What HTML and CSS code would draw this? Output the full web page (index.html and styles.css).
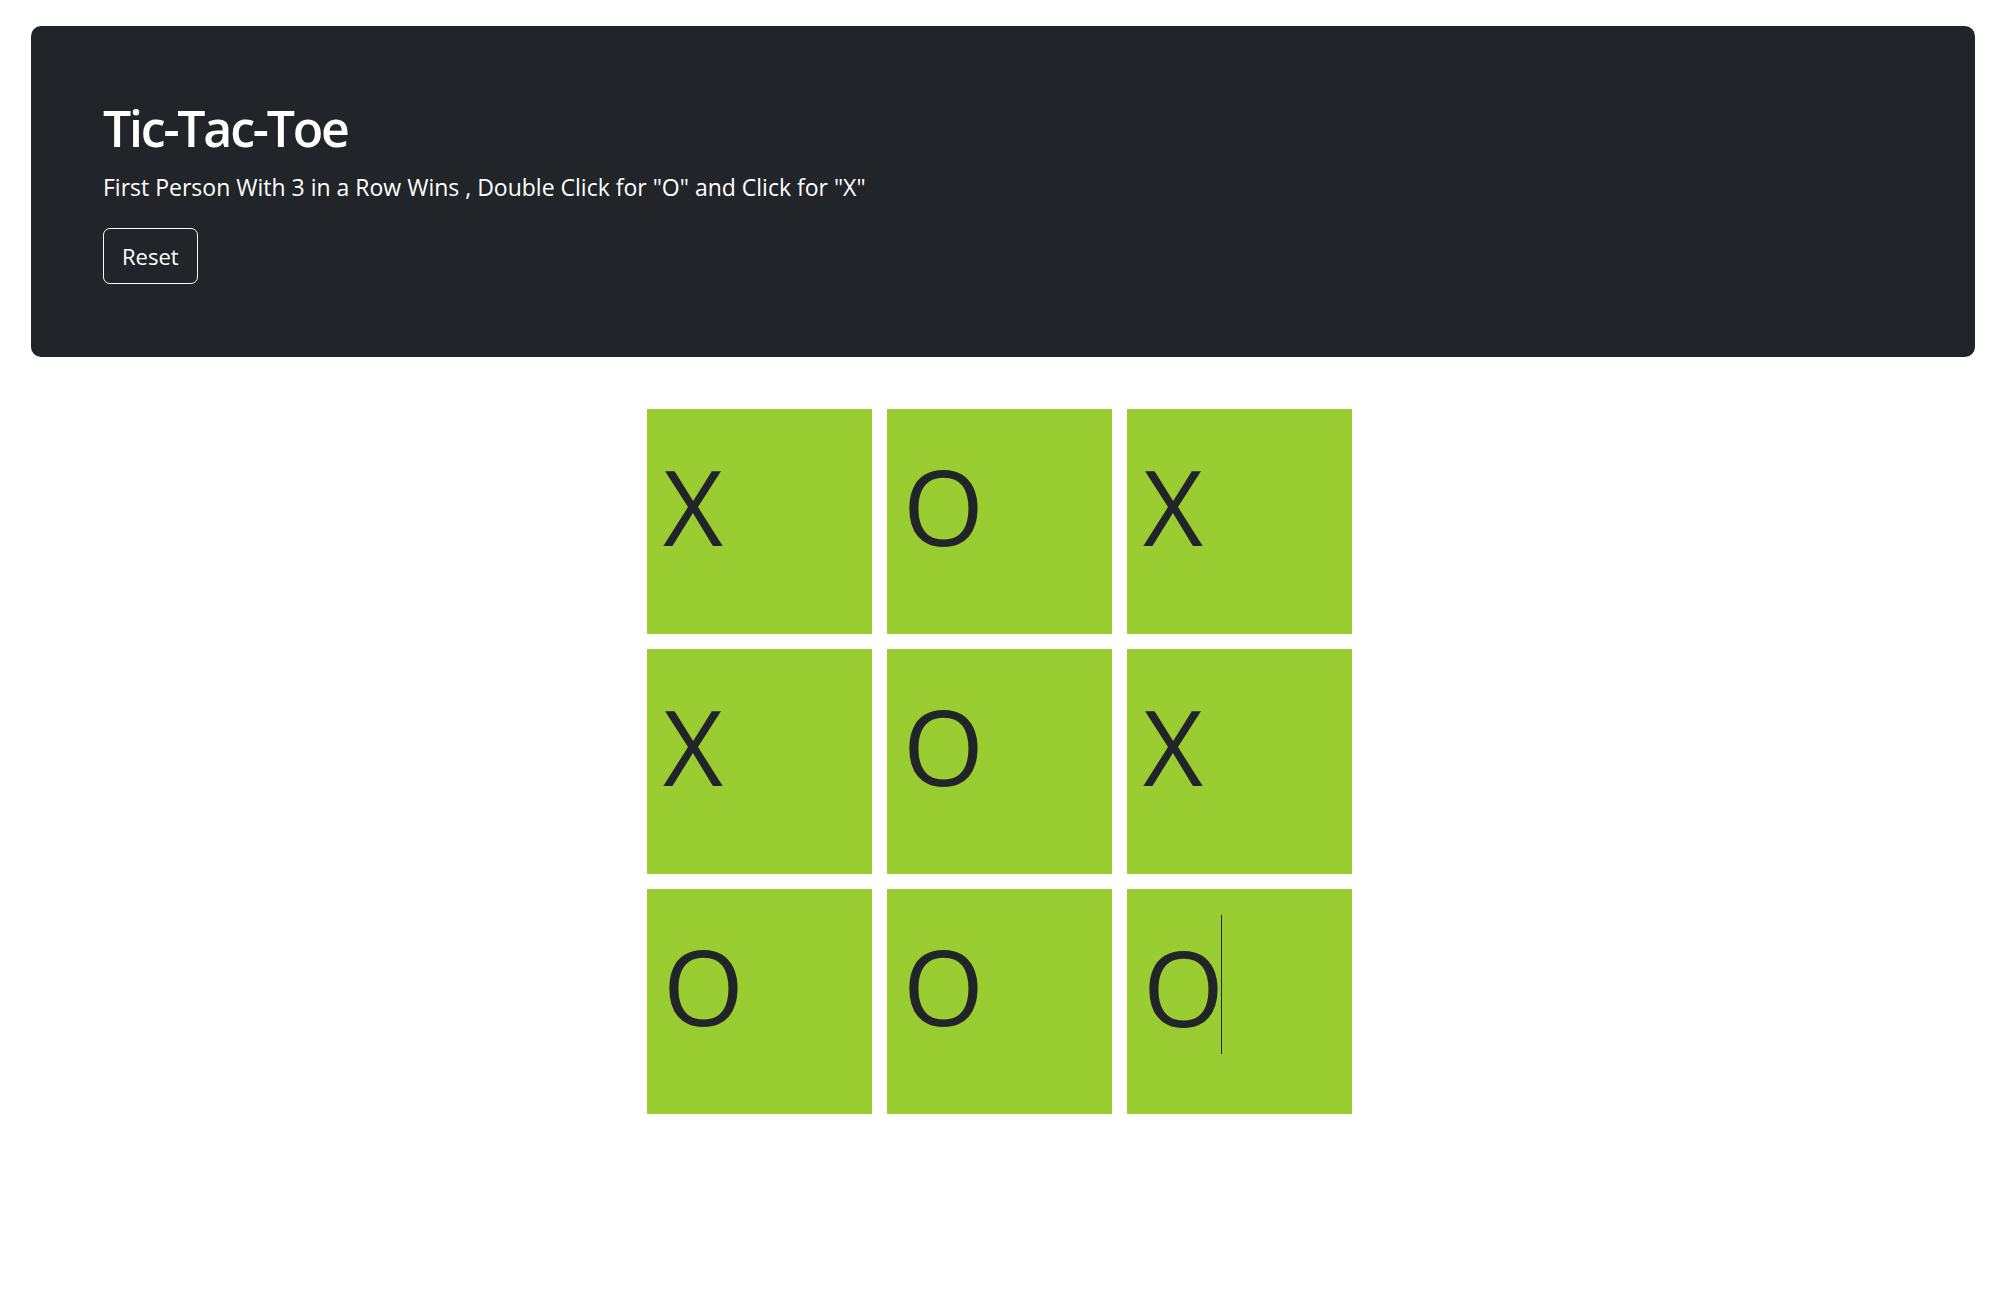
FILE: index.html
```html
<!DOCTYPE html>
<html lang="en">
<head>
<meta charset="utf-8">
<title>Tic-Tac-Toe</title>
<link rel="stylesheet" href="styles.css">
</head>
<body>
<header class="hero">
  <h1 class="hero-title">Tic-Tac-Toe</h1>
  <p class="hero-text">First Person With 3 in a Row Wins , Double Click for "O" and Click for "X"</p>
  <button class="btn-reset" type="button">Reset</button>
</header>
<main class="stage">
  <div class="board">
    <div class="cell">X</div>
    <div class="cell">O</div>
    <div class="cell">X</div>
    <div class="cell">X</div>
    <div class="cell">O</div>
    <div class="cell">X</div>
    <div class="cell">O</div>
    <div class="cell">O</div>
    <div class="cell">O<span class="caret"></span></div>
  </div>
</main>
</body>
</html>
```

FILE: styles.css
```css
* { box-sizing: border-box; }

html, body {
  margin: 0;
  padding: 0;
  background: #ffffff;
}

body {
  font-family: "Open Sans", "Noto Sans", "Liberation Sans", sans-serif;
  color: #212529;
}

.hero {
  margin: 26px 39px 0 31px;
  padding: 72px 72px 73px;
  background: #212529;
  border-radius: 10px;
  color: #ffffff;
}

.hero-title {
  margin: 0;
  font-size: 50px;
  line-height: 60px;
  font-weight: 600;
  letter-spacing: -2.2px;
}

.hero-text {
  margin: 13px 0 0;
  font-size: 23px;
  line-height: 33px;
  font-weight: 400;
}

.btn-reset {
  display: block;
  margin-top: 24px;
  height: 56px;
  padding: 0 18px;
  background: transparent;
  color: #ffffff;
  border: 1px solid #f8f9fa;
  border-radius: 7px;
  font-family: inherit;
  font-size: 22px;
  line-height: 34px;
  cursor: pointer;
}

.stage {
  display: flex;
  justify-content: center;
  padding-right: 15px;
  margin-top: 52px;
}

.board {
  display: grid;
  grid-template-columns: repeat(3, 225px);
  grid-auto-rows: 225px;
  gap: 15px;
}

.cell {
  background: #9acd32;
  padding: 26px 16px 0;
  font-size: 104px;
  line-height: normal;
  font-weight: 400;
  color: #212529;
  overflow: hidden;
}

.caret {
  display: inline-block;
  width: 1px;
  height: 139px;
  margin-left: -3px;
  background: #212529;
  vertical-align: -27px;
}
```
